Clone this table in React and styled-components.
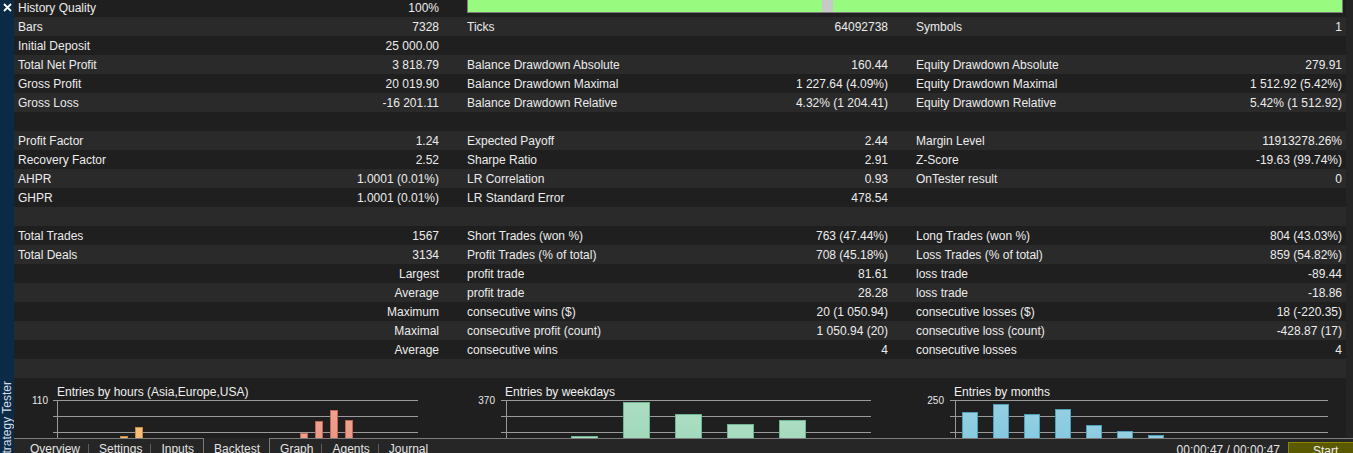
import styled, { createGlobalStyle } from 'styled-components'

const Global = createGlobalStyle`
  html, body {
    margin: 0;
    height: 453px;
    overflow: hidden;
    background: #1f1f1f;
  }
  body {
    font-family: "Liberation Sans", Arial, sans-serif;
    font-size: 12px;
    color: #ececec;
  }
`

const Shell = styled.div`
  display: flex;
  height: 453px;
  overflow: hidden;
`

const Sidebar = styled.div`
  width: 14px;
  flex: none;
  background: #0b2a45;
  display: flex;
  flex-direction: column;
  justify-content: space-between;
  align-items: center;
  padding-top: 3px;
  box-sizing: border-box;
`

const SideLabel = styled.div`
  writing-mode: vertical-rl;
  transform: rotate(180deg);
  white-space: nowrap;
  font-size: 12px;
  line-height: 13px;
  color: #d6dde6;
  margin-bottom: -8px;
`

const Main = styled.div`
  flex: 1;
  display: flex;
  flex-direction: column;
  min-width: 0;
`

const Body = styled.div`
  height: 438px;
  flex: none;
  display: flex;
  overflow: hidden;
`

const Content = styled.div`
  flex: 1;
  display: flex;
  flex-direction: column;
  min-width: 0;
`

const Scrollbar = styled.div`
  width: 7px;
  flex: none;
  background: #242424;
`

const Table = styled.div`
  margin-top: -2px;
  flex: none;
`

const Row = styled.div`
  display: grid;
  grid-template-columns: 449px 449px 1fr;
  height: 19px;
  box-sizing: border-box;
  padding-top: 1px;
  line-height: 18px;
  background: ${(p) => (p.$odd ? '#2a2a2a' : '#1f1f1f')};
`

const Cell = styled.div`
  display: flex;
  justify-content: space-between;
  padding: 0 ${(p) => (p.$last ? '4px' : '24px')} 0 4px;
  white-space: nowrap;
  overflow: hidden;
`

const Value = styled.span`
  text-align: right;
`

const Quality = styled.div`
  grid-column: 2 / span 2;
  margin-top: -1px;
  padding: 0 3px 0 4px;
  display: flex;
  align-items: flex-start;
`

const Track = styled.div`
  flex: 1;
  height: 14px;
  border: 1px solid #7c7c7c;
  border-top: none;
  background: linear-gradient(
    to right,
    #98fb80 0,
    #98fb80 354px,
    #c8c8c8 354px,
    #c8c8c8 365px,
    #98fb80 365px
  );
`

const Charts = styled.div`
  flex: 1;
  display: grid;
  grid-template-columns: 449px 449px 1fr;
  background: #1f1f1f;
  overflow: hidden;
`

const ChartSvg = styled.svg`
  display: block;
  width: 100%;
  height: 80px;
  overflow: hidden;
`

const TabBar = styled.div`
  flex: none;
  height: 22px;
  display: flex;
  align-items: flex-start;
  border-top: 1px solid #7c7c7c;
  background: #262626;
  padding-left: 6px;
`

const Tab = styled.div`
  position: relative;
  padding: 2px 9px 0 10px;
  line-height: 16px;
  height: 100%;
  box-sizing: border-box;
  color: #e4e4e4;
  ${(p) =>
    p.$active
      ? `
    margin-top: -1px;
    border-left: 1px solid #7c7c7c;
    border-right: 1px solid #7c7c7c;
    background: #262626;
    padding-top: 3px;
  `
      : ''}
  ${(p) =>
    p.$sep
      ? `
    &::after {
      content: '';
      position: absolute;
      right: 0;
      top: 5px;
      bottom: 0;
      width: 1px;
      background: #5e5e5e;
    }
  `
      : ''}
`

const Timer = styled.div`
  margin-left: auto;
  padding-top: 3px;
  line-height: 16px;
  color: #e4e4e4;
  margin-right: 8px;
`

const StartButton = styled.div`
  width: 65px;
  height: 20px;
  margin-top: 3px;
  background: #5b5900;
  border: 1px solid #8a8700;
  border-right: none;
  box-sizing: border-box;
  color: #f2f2f2;
  line-height: 17px;
  padding-left: 24px;
`

const rows = [
  null,
  [['Bars', '7328'], ['Ticks', '64092738'], ['Symbols', '1']],
  [['Initial Deposit', '25 000.00'], ['', ''], ['', '']],
  [['Total Net Profit', '3 818.79'], ['Balance Drawdown Absolute', '160.44'], ['Equity Drawdown Absolute', '279.91']],
  [['Gross Profit', '20 019.90'], ['Balance Drawdown Maximal', '1 227.64 (4.09%)'], ['Equity Drawdown Maximal', '1 512.92 (5.42%)']],
  [['Gross Loss', '-16 201.11'], ['Balance Drawdown Relative', '4.32% (1 204.41)'], ['Equity Drawdown Relative', '5.42% (1 512.92)']],
  [['', ''], ['', ''], ['', '']],
  [['Profit Factor', '1.24'], ['Expected Payoff', '2.44'], ['Margin Level', '11913278.26%']],
  [['Recovery Factor', '2.52'], ['Sharpe Ratio', '2.91'], ['Z-Score', '-19.63 (99.74%)']],
  [['AHPR', '1.0001 (0.01%)'], ['LR Correlation', '0.93'], ['OnTester result', '0']],
  [['GHPR', '1.0001 (0.01%)'], ['LR Standard Error', '478.54'], ['', '']],
  [['', ''], ['', ''], ['', '']],
  [['Total Trades', '1567'], ['Short Trades (won %)', '763 (47.44%)'], ['Long Trades (won %)', '804 (43.03%)']],
  [['Total Deals', '3134'], ['Profit Trades (% of total)', '708 (45.18%)'], ['Loss Trades (% of total)', '859 (54.82%)']],
  [['', 'Largest'], ['profit trade', '81.61'], ['loss trade', '-89.44']],
  [['', 'Average'], ['profit trade', '28.28'], ['loss trade', '-18.86']],
  [['', 'Maximum'], ['consecutive wins ($)', '20 (1 050.94)'], ['consecutive losses ($)', '18 (-220.35)']],
  [['', 'Maximal'], ['consecutive profit (count)', '1 050.94 (20)'], ['consecutive loss (count)', '-428.87 (17)']],
  [['', 'Average'], ['consecutive wins', '4'], ['consecutive losses', '4']],
  [['', ''], ['', ''], ['', '']],
]

const charts = [
  {
    title: 'Entries by hours (Asia,Europe,USA)',
    label: '110',
    titleX: 43,
    labelX: 34,
    axisX: 43.5,
    grid: [39, 404],
    bars: [
      { x: 106, w: 8, top: 58, c: '#f3b262', s: '#c98a3c' },
      { x: 121, w: 8, top: 49, c: '#f3b262', s: '#c98a3c' },
      { x: 286, w: 8, top: 55, c: '#e98e78', s: '#c06652' },
      { x: 301, w: 8, top: 43, c: '#e98e78', s: '#c06652' },
      { x: 316, w: 8, top: 32, c: '#e98e78', s: '#c06652' },
      { x: 331, w: 8, top: 42, c: '#e98e78', s: '#c06652' },
    ],
  },
  {
    title: 'Entries by weekdays',
    label: '370',
    titleX: 42,
    labelX: 32,
    axisX: 43.5,
    grid: [38, 408],
    bars: [108, 160, 212, 264, 316].map((x, i) => ({
      x,
      w: 27,
      top: [58, 24, 36, 46, 42][i],
      c: '#9ad6b6',
      s: '#6fb592',
    })),
  },
  {
    title: 'Entries by months',
    label: '250',
    titleX: 42,
    labelX: 32,
    axisX: 43.5,
    grid: [38, 416],
    bars: [50, 81, 112, 143, 174, 205, 236].map((x, i) => ({
      x,
      w: 16,
      top: [34, 26, 36, 31, 47, 53, 57][i],
      c: '#7cc5dc',
      s: '#4f9fb8',
    })),
  },
]

function Chart({ chart, id }) {
  return (
    <ChartSvg>
      <defs>
        {chart.bars.map((b, i) => (
          <linearGradient key={i} id={`g${id}${i}`} x1="0" y1="0" x2="0" y2="1">
            <stop offset="0" stopColor="#ffffff" stopOpacity="0.18" />
            <stop offset="1" stopColor="#ffffff" stopOpacity="0" />
          </linearGradient>
        ))}
      </defs>
      <text x={chart.titleX} y="17.5" fill="#f0f0f0" fontSize="12">
        {chart.title}
      </text>
      <text x={chart.labelX} y="26" fill="#e8e8e8" fontSize="10" textAnchor="end">
        {chart.label}
      </text>
      {[22.5, 38.5, 54.5].map((y) => (
        <line key={y} x1={chart.grid[0]} x2={chart.grid[1]} y1={y} y2={y} stroke="#9a9a9a" strokeWidth="1" />
      ))}
      <line x1={chart.axisX} x2={chart.axisX} y1="22" y2="80" stroke="#9a9a9a" strokeWidth="1" />
      {chart.bars.map((b, i) => (
        <g key={i}>
          <rect x={b.x + 0.5} y={b.top + 0.5} width={b.w - 1} height={80 - b.top} fill={b.c} stroke={b.s} />
          <rect x={b.x + 1} y={b.top + 1} width={b.w - 2} height={80 - b.top} fill={`url(#g${id}${i})`} />
        </g>
      ))}
    </ChartSvg>
  )
}

const tabs = ['Overview', 'Settings', 'Inputs', 'Backtest', 'Graph', 'Agents', 'Journal']

function App() {
  return (
    <Shell>
      <Global />
      <Sidebar>
        <svg width="9" height="9" viewBox="0 0 9 9">
          <path d="M1 1 L8 8 M8 1 L1 8" stroke="#ffffff" strokeWidth="1.8" />
        </svg>
        <SideLabel>Strategy Tester</SideLabel>
      </Sidebar>
      <Main>
        <Body>
          <Content>
            <Table>
              {rows.map((r, i) =>
                r === null ? (
                  <Row key={i} $odd={i % 2 === 1}>
                    <Cell>
                      <span>History Quality</span>
                      <Value>100%</Value>
                    </Cell>
                    <Quality>
                      <Track />
                    </Quality>
                  </Row>
                ) : (
                  <Row key={i} $odd={i % 2 === 1}>
                    {r.map((c, j) => (
                      <Cell key={j} $last={j === 2}>
                        <span>{c[0]}</span>
                        <Value>{c[1]}</Value>
                      </Cell>
                    ))}
                  </Row>
                )
              )}
            </Table>
            <Charts>
              {charts.map((c, i) => (
                <Chart key={i} chart={c} id={i} />
              ))}
            </Charts>
          </Content>
          <Scrollbar />
        </Body>
        <TabBar>
          {tabs.map((t, i) => (
            <Tab
              key={t}
              $active={t === 'Backtest'}
              $sep={t !== 'Backtest' && tabs[i + 1] !== 'Backtest' && i < tabs.length - 1}
            >
              {t}
            </Tab>
          ))}
          <Timer>00:00:47 / 00:00:47</Timer>
          <StartButton>Start</StartButton>
        </TabBar>
      </Main>
    </Shell>
  )
}

export default App
